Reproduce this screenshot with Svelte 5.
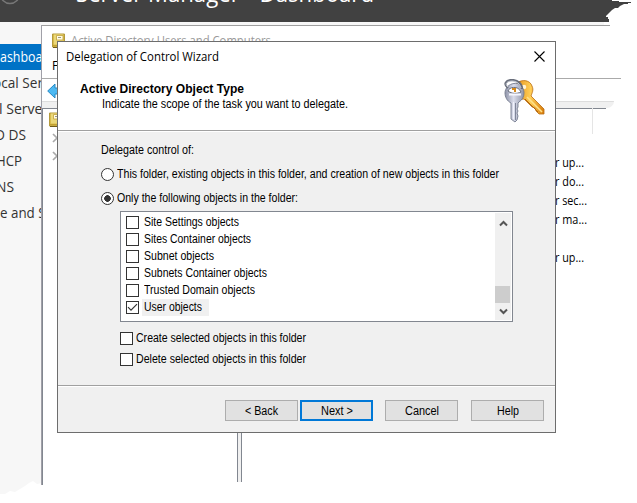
<script>
  const navItems = [
    { label: 'ashboard', width: 55, shift: 0 },
    { label: 'ocal Server', width: 70, shift: -7 },
    { label: 'l Servers', width: 56, shift: -1 },
    { label: 'D DS', width: 31, shift: -5 },
    { label: 'HCP', width: 26, shift: -4 },
    { label: 'NS', width: 18, shift: -4 },
    { label: 'e and Storage', width: 86, shift: 0 }
  ];
  const objectTypes = [
    { label: 'Site Settings objects', width: 95 },
    { label: 'Sites Container objects', width: 107 },
    { label: 'Subnet objects', width: 70 },
    { label: 'Subnets Container objects', width: 123 },
    { label: 'Trusted Domain objects', width: 111 },
    { label: 'User objects', width: 58, checked: true }
  ];
  const actions = [
    { label: 'Create selected objects in this folder', width: 170 },
    { label: 'Delete selected objects in this folder', width: 170 }
  ];
  const descriptions = [
    { label: 'r up...', width: 29 },
    { label: 'r do...', width: 29 },
    { label: 'r sec...', width: 32 },
    { label: 'r ma...', width: 32 },
    { label: '', width: 0 },
    { label: 'r up...', width: 29 }
  ];

  // Condenses or widens a label so that it takes up the given width.
  function fit(node, width) {
    node.style.display = 'inline-block';
    const natural = node.getBoundingClientRect().width;
    if (!natural) return;
    node.style.width = `${width}px`;
    node.style.transformOrigin = '0 50%';
    node.style.transform = `scaleX(${width / natural})`;
  }
</script>

{#snippet book()}
  <svg class="book" width="13" height="16" viewBox="0 0 13 16">
    <path d="M.5 1h12v13H.5z" fill="#d9bd4c" stroke="#b49a3d" />
    <path d="M2 1.5h9v10H2z" fill="#ead779" />
    <path d="M4.500 2.500h6.500v4.500H4.500z" fill="#fffbe2" stroke="#c1a13a" stroke-width=".8" />
    <path d="M6 4.500h3" stroke="#9b9885" />
    <path d="M1 12.500h11" stroke="#c3a130" />
    <path d="M1 14.500h11" stroke="#705a18" />
  </svg>
{/snippet}

{#snippet box(checked)}
  <span class="check">
    {#if checked}
      <svg width="11" height="11" viewBox="0 0 11 11"><path d="M1 5.2 4 8.2 10 2.2" fill="none" stroke="#333" stroke-width="1.2" /></svg>
    {/if}
  </span>
{/snippet}

<div class="screen">
  <header>
    <svg class="ring" width="24" height="6" viewBox="0 0 24 6"><circle cx="10" cy="-6" r="9.500" fill="none" stroke="#777" stroke-width="1.500" /></svg>
    <div class="app-title"><span use:fit={298}>Server Manager • Dashboard</span></div>
    <svg class="tear" width="34" height="22" viewBox="0 0 34 22">
      <path d="M0 0h10v1h7v1h12v1h-3v1h-4l-4 2-2 2h-3l-3 2-2 2-2 2-2 2v1h2v2h1v3H0z" fill="#414141" />
    </svg>
  </header>
  <nav>
    {#each navItems as item, i}
      <div class="nav-item" class:active={i === 0}><div style:margin-left={`${item.shift}px`}><span use:fit={item.width}>{item.label}</span></div></div>
    {/each}
    <svg class="nav-tear" width="42" height="18" viewBox="0 0 42 18">
      <path d="M0 18V17h5l5-3 5 1 5-3 5-3 4-3 4-2 4 3 5-1v12z" fill="#fff" />
    </svg>
  </nav>

  <section class="console">
    <div class="console-title">{@render book()}<span use:fit={200}>Active Directory Users and Computers</span></div>
    <div class="console-menu">F</div>
    <div class="toolbar">
      <svg width="18" height="16" viewBox="0 0 18 16"><path d="M.7 8 8 1v4h9v6H8v4z" fill="#4db9f2" stroke="#2689c5" /></svg>
    </div>
    <div class="band"></div>
    <div class="panes">
      <div class="tree">
        {@render book()}
        {#each [0, 1] as row}
          <svg class="twist" width="7" height="10" viewBox="0 0 7 10"><path d="m1 1 4 4-4 4" fill="none" stroke="#aaa" stroke-width="1.7" /></svg>
        {/each}
      </div>
      <div class="splitter"></div>
      <div class="details">
        <div class="column-head"></div>
        {#each descriptions as entry}
          <div class="description"><span use:fit={entry.width}>{entry.label}</span></div>
        {/each}
      </div>
    </div>
  </section>

  <section class="dialog">
    <div class="dialog-title">
      <span use:fit={153}>Delegation of Control Wizard</span>
      <svg width="11" height="11" viewBox="0 0 11 11"><path d="m.5.5 10 10m0-10-10 10" stroke="#000" stroke-width="1.1" /></svg>
    </div>
    <div class="banner">
      <div class="banner-text">
        <b><span use:fit={164}>Active Directory Object Type</span></b>
        <p><span use:fit={246}>Indicate the scope of the task you want to delegate.</span></p>
      </div>
      <svg class="keys" width="42" height="46" viewBox="0 0 42 46">
        <defs>
          <linearGradient id="gold"><stop offset="0" stop-color="#e08a13" /><stop offset=".55" stop-color="#ffcd55" /><stop offset="1" stop-color="#d87c0b" /></linearGradient>
          <linearGradient id="silver"><stop offset="0" stop-color="#8e93a8" /><stop offset=".45" stop-color="#d9dcea" /><stop offset="1" stop-color="#8f94a8" /></linearGradient>
        </defs>
        <path d="M13 4C18 0 26 1 28 7c2 4 0 7-1 10l13 13v5l-5 0-3-3-1-3-3-1-8-8c-6 1-10-3-10-8 0-3 1-6 3-8z" fill="url(#gold)" stroke="#b96c13" stroke-width=".8" />
        <path d="m23 18 15 15" stroke="#ffe18a" stroke-width="1.6" />
        <path d="m21 20 13 13" stroke="#b4650b" stroke-width="1" />
        <circle cx="20" cy="8" r="2.3" fill="#fff3d5" />
        <path d="M10 4.500C15 3 20 8 20 14c0 4-2 7-5 9l-1 1v4l-1 2 1 2-1 2 1 3-1 4-2 2-4-3V24c-4-2-6-6-6-10 0-5 4-9 9-9.500z" fill="url(#silver)" stroke="#747a8d" stroke-width=".9" />
        <path d="M4 12c1-4 10-6 13 1-4 2-9 2-13-1z" fill="#fff" stroke="#666b7b" />
        <path d="M8 9h4v4h-2v-2H8z" fill="#d88a18" />
        <path d="M5 15.500h12" stroke="#f6f7ff" stroke-width="2" />
        <path d="M9.500 23v17" stroke="#f0f2fc" stroke-width="1.300" /><path d="M11.500 24v17" stroke="#808699" />
        <path d="M4 9C-1 5 2 1 8 1c6 0 10 4 10 9" fill="none" stroke="#696e7b" stroke-width="2.200" />
        <path d="M4 8C0 5 3 2 8 2c5 0 8 3 9 7" fill="none" stroke="#c1c5cf" />
      </svg>
    </div>
    <div class="body">
      <div class="prompt"><span use:fit={93}>Delegate control of:</span></div>
      <div class="radio-row"><span class="radio"></span><span use:fit={382}>This folder, existing objects in this folder, and creation of new objects in this folder</span></div>
      <div class="radio-row"><span class="radio on"></span><span use:fit={181}>Only the following objects in the folder:</span></div>
      <div class="list">
        <div class="options">
          {#each objectTypes as type}
            <div class="option">{@render box(type.checked)}<div class="option-label" class:selected={type.checked}><span use:fit={type.width}>{type.label}</span></div></div>
          {/each}
        </div>
        <div class="scrollbar">
          <svg width="9" height="7" viewBox="0 0 9 7"><path d="M1 5.500 4.500 2 8 5.500" fill="none" stroke="#555" stroke-width="2" /></svg>
          <div class="thumb"></div>
          <svg width="9" height="7" viewBox="0 0 9 7"><path d="M1 1.500 4.500 5 8 1.500" fill="none" stroke="#555" stroke-width="2" /></svg>
        </div>
      </div>
      {#each actions as action}
        <div class="action">{@render box(false)}<span use:fit={action.width}>{action.label}</span></div>
      {/each}
    </div>
    <footer>
      <div class="button"><span use:fit={33}>&lt; Back</span></div>
      <div class="button primary"><span use:fit={32}>Next &gt;</span></div>
      <div class="button cancel"><span use:fit={34}>Cancel</span></div>
      <div class="button"><span use:fit={22}>Help</span></div>
    </footer>
  </section>
</div>

<style>
  :global(body) { background: #fff; }
  * { box-sizing: border-box; }
  .screen { position: relative; width: 637px; height: 503px; overflow: hidden; background: #fff; font: 12px/16px "Liberation Sans", sans-serif; color: #000; white-space: nowrap; }
  svg { display: block; flex: none; }
  header { position: relative; width: 604px; height: 25px; border-bottom: 3px solid #f7f7f7; background: #414141; }
  .ring { position: absolute; left: 0; top: 0; }
  .app-title { display: flex; align-items: flex-start; height: 12px; overflow: hidden; padding-left: 76px; font: 23px/23px "Open Sans", sans-serif; font-weight: 400; color: #fff; }
  .app-title span { flex: none; margin-top: -18px; }
  .tear { position: absolute; left: 602px; top: 0; }
  nav { position: relative; width: 41px; height: 470px; padding-top: 19px; overflow: hidden; background: #f7f7f7; font: 14px/26px "Open Sans", sans-serif; color: #333; }
  .nav-item { height: 26px; }
  .active { background: #0072c6; color: #fff; }
  .nav-tear { position: absolute; left: 0; bottom: 0; }

  .console { position: absolute; left: 41px; top: 25px; width: 580px; height: 460px; border-left: 1px solid #a0a0a8; font: 12px/18px "Open Sans", sans-serif; background: #fff; }
  .console-title { display: flex; gap: 6px; width: 568px; height: 28px; padding: 7px 0 0 10px; border-top: 1px solid #9f9f9f; color: #999; }
  .console-title span { height: 18px; margin-top: -1px; }
  .console-menu { height: 26px; padding: 4px 0 0 10px; border-bottom: 1px solid #aaa; }
  .toolbar { height: 22px; padding: 4px 0 0 5px; }
  .band { width: 572px; height: 7px; border-top: 1px solid #ddd; background: #f0f0f0; border-radius: 0 0 8px 0; }
  .panes { display: flex; height: 377px; }
  .tree { width: 195px; border: solid #828790; border-width: 1px 0 0 1px; padding: 3px 0 0 6px; }
  .twist { margin: 5px 0 0 3px; }
  .twist + .twist { margin-top: 8px; }
  .splitter { width: 5px; height: 374px; border: solid #828790; border-width: 0 1px; background: #f0f0f0; }
  .details { width: 364px; background: linear-gradient(#828790, #828790) 0 0 / 364px 1px no-repeat; }
  .column-head { width: 351px; height: 26px; margin-bottom: 19px; border-right: 1px solid #e5e5e5; }
  .description { height: 19px; padding-left: 313px; line-height: 19px; }

  .dialog { position: absolute; left: 57px; top: 41px; width: 499px; height: 392px; border: 1px solid #6d6d6d; background: #f0f0f0; }
  .dialog-title { display: flex; justify-content: space-between; align-items: center; height: 29px; padding: 0 10px 0 8px; font: 12px/16px "Open Sans", sans-serif; background: #fff; }
  .banner { display: flex; justify-content: space-between; height: 60px; padding: 8px 9px 0 22px; border-bottom: 1px solid #a0a0a0; background: #fff; }
  .banner-text { padding-top: 2px; }
  .banner b { display: block; height: 16px; line-height: 16px; }
  .banner p { margin: -1px 0 0 22px; }
  .body { height: 254px; padding: 12px 42px 0 43px; border-top: 1px solid #fff; }
  .prompt { height: 16px; margin-top: -2px; }
  .radio-row { display: flex; align-items: center; gap: 3px; height: 16px; margin-top: 8px; }
  .radio { flex: none; width: 13px; height: 13px; border: 1px solid #333; border-radius: 50%; background: #fff; }
  .on { background: radial-gradient(circle, #333 0 3px, #fff 3.600px); }
  .list { display: flex; justify-content: space-between; width: 393px; height: 111px; margin: 5px 0 8px 19px; padding: 1px; border: 1px solid #828790; background: #fff; }
  .options { padding-top: 1px; }
  .option { display: flex; align-items: center; gap: 3px; height: 17px; padding-left: 4px; }
  .option-label { height: 17px; padding: 0 7px 0 2px; line-height: 17px; }
  .selected { background: #f0f0f0; }
  .check { flex: none; width: 13px; height: 13px; border: 1px solid #333; background: #fff; }
  .scrollbar { display: flex; flex-direction: column; align-items: center; width: 16px; padding: 7px 0 5px; background: #f0f0f0; }
  .thumb { width: 15px; height: 17px; margin: auto 1px 5px 0; background: #cdcdcd; }
  .action { display: flex; align-items: center; gap: 3px; height: 16px; margin: 0 0 5px 19px; }
  footer { display: flex; height: 47px; padding: 14px 0 0 167px; border-top: 1px solid #a0a0a0; box-shadow: inset 0 1px #fff; }
  .button { display: flex; align-items: center; justify-content: center; width: 73px; height: 21px; margin-right: 2px; border: 1px solid #adadad; background: #e1e1e1; }
  .primary { border: 2px solid #0078d7; }
  .cancel { margin: 0 13px 0 10px; }
</style>
